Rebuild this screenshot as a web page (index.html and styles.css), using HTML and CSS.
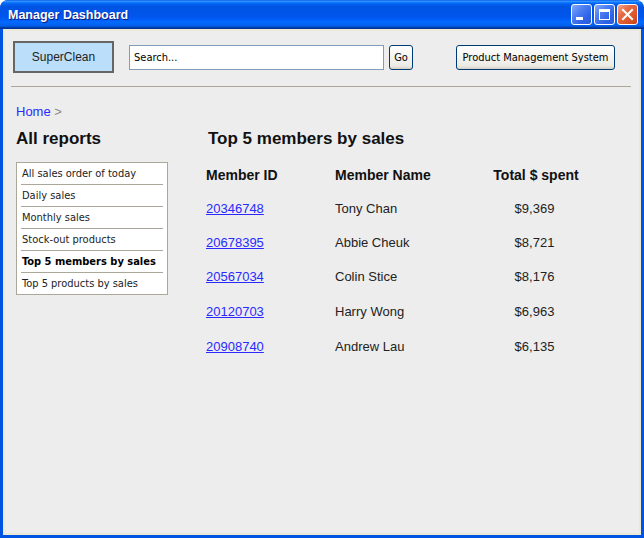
FILE: index.html
```html
<!DOCTYPE html>
<html>
<head>
<meta charset="utf-8">
<title>Manager Dashboard</title>
<link rel="stylesheet" href="styles.css">
</head>
<body>
<div class="window">
  <div class="titlebar">
    <span class="title">Manager Dashboard</span>
    <div class="controls">
      <span class="ctl ctl-blue">
        <svg width="19" height="19" viewBox="0 0 19 19"><rect x="4" y="12" width="7" height="3" fill="#fff"/></svg>
      </span>
      <span class="ctl ctl-blue">
        <svg width="19" height="19" viewBox="0 0 19 19"><path d="M4 4h11v11H4z M5 7v7h9V7z" fill="#fff" fill-rule="evenodd"/></svg>
      </span>
      <span class="ctl ctl-close">
        <svg width="19" height="19" viewBox="0 0 19 19"><path d="M5 5L14 14M14 5L5 14" stroke="#fff" stroke-width="2" stroke-linecap="square"/></svg>
      </span>
    </div>
  </div>
  <div class="client">
    <div class="toolbar">
      <div class="brand">SuperClean</div>
      <div class="search">Search...</div>
      <button class="xp-btn go">Go</button>
      <button class="xp-btn pms">Product Management System</button>
    </div>
    <div class="divider"></div>
    <div class="crumb"><a href="#" class="crumb-link">Home</a> <span class="crumb-sep">&gt;</span></div>
    <div class="cols">
      <aside class="side">
        <h2 class="heading">All reports</h2>
        <ul class="reports">
          <li>All sales order of today</li>
          <li>Daily sales</li>
          <li>Monthly sales</li>
          <li>Stock-out products</li>
          <li class="active">Top 5 members by sales</li>
          <li>Top 5 products by sales</li>
        </ul>
      </aside>
      <main class="main">
        <h2 class="heading main-heading">Top 5 members by sales</h2>
        <div class="table">
          <div class="th">Member ID</div>
          <div class="th">Member Name</div>
          <div class="th num">Total $ spent</div>

          <div class="td"><a href="#" class="mlink">20346748</a></div>
          <div class="td">Tony Chan</div>
          <div class="td num amt">$9,369</div>

          <div class="td"><a href="#" class="mlink">20678395</a></div>
          <div class="td">Abbie Cheuk</div>
          <div class="td num amt">$8,721</div>

          <div class="td"><a href="#" class="mlink">20567034</a></div>
          <div class="td">Colin Stice</div>
          <div class="td num amt">$8,176</div>

          <div class="td"><a href="#" class="mlink">20120703</a></div>
          <div class="td">Harry Wong</div>
          <div class="td num amt">$6,963</div>

          <div class="td"><a href="#" class="mlink">20908740</a></div>
          <div class="td">Andrew Lau</div>
          <div class="td num amt">$6,135</div>
        </div>
      </main>
    </div>
  </div>
</div>
</body>
</html>
```
FILE: styles.css
```css
html, body {
  margin: 0;
  padding: 0;
  background: #ffffff;
}

.window {
  width: 644px;
  height: 538px;
  box-sizing: border-box;
  background: #0054e3;
  border-radius: 8px 8px 0 0;
  display: flex;
  flex-direction: column;
  overflow: hidden;
}

.titlebar {
  height: 29px;
  flex: none;
  display: flex;
  align-items: center;
  padding: 0 6px 0 8px;
  border-radius: 8px 8px 0 0;
  background: linear-gradient(to bottom,
    #0058ee 0%, #3a93ff 4%, #288eff 6%, #127dff 8%, #036ffc 10%,
    #0262ee 14%, #0057e5 20%, #0054e3 24%, #0055eb 56%, #005bf5 66%,
    #026afe 76%, #0062ef 86%, #0052d6 92%, #0040ab 94%, #003092 100%);
}

.title {
  font-family: "Liberation Sans", Arial, sans-serif;
  font-weight: bold;
  font-size: 12.5px;
  color: #ffffff;
  text-shadow: 1px 1px 0 #0a1883;
}

.controls {
  margin-left: auto;
  display: flex;
  gap: 2px;
}

.ctl {
  width: 21px;
  height: 21px;
  box-sizing: border-box;
  border: 1px solid #ffffff;
  border-radius: 3px;
  display: block;
}

.ctl svg {
  display: block;
}

.ctl-blue {
  background: linear-gradient(135deg, #86a9f7 0%, #4f80f2 35%, #2f63e8 70%, #2a5ad9 100%);
}

.ctl-close {
  background: linear-gradient(135deg, #f3a58c 0%, #e76a43 35%, #dc5528 70%, #c8431a 100%);
}

.client {
  flex: 1;
  margin: 0 3px 3px 3px;
  border: 2px solid #ece9d8;
  background: #ededed;
  padding-top: 10px;
  font-family: "Liberation Sans", Arial, sans-serif;
}

.toolbar {
  display: flex;
  align-items: center;
  padding-left: 8px;
  height: 32px;
}

.brand {
  width: 101px;
  height: 32px;
  box-sizing: border-box;
  border: 2px solid #666666;
  background: #bbdefb;
  display: flex;
  align-items: center;
  justify-content: center;
  font-size: 12px;
  color: #222222;
}

.search {
  margin-left: 15px;
  width: 255px;
  height: 25px;
  box-sizing: border-box;
  border: 1px solid #7f9db9;
  background: #ffffff;
  padding-left: 4px;
  font-family: "DejaVu Sans Condensed", "DejaVu Sans", sans-serif;
  font-size: 11px;
  line-height: 23px;
  color: #000000;
}

.xp-btn {
  height: 25px;
  box-sizing: border-box;
  border: 1px solid #003c74;
  border-radius: 3px;
  background: linear-gradient(to bottom, #ffffff 0%, #f4f3ee 50%, #ecebe6 86%, #d6d0c5 100%);
  font-family: "DejaVu Sans Condensed", "DejaVu Sans", sans-serif;
  font-size: 11px;
  color: #000000;
  padding: 0;
  margin: 0;
}

.go {
  margin-left: 5px;
  width: 24px;
}

.pms {
  margin-left: 43px;
  width: 159px;
}

.divider {
  margin: 13px 8px 0 6px;
  border-top: 1px solid #aca899;
}

.crumb {
  margin: 17px 0 0 11px;
  font-size: 13px;
  line-height: 15px;
}

.crumb-link {
  color: #2a2aff;
  text-decoration: none;
}

.crumb-sep {
  color: #888888;
}

.cols {
  display: flex;
  margin: 10px 0 0 11px;
}

.side {
  width: 152px;
  flex: none;
}

.heading {
  margin: 0;
  font-size: 17px;
  line-height: 20px;
  font-weight: bold;
  color: #111111;
}

.main {
  margin-left: 38px;
}

.main-heading {
  padding-left: 2px;
}

.reports {
  list-style: none;
  margin: 13px 0 0 0;
  padding: 0 4px;
  border: 1px solid #aca899;
  background: #ffffff;
}

.reports li {
  height: 21px;
  line-height: 21px;
  padding-left: 1px;
  border-bottom: 1px solid #aca899;
  font-family: "DejaVu Sans Condensed", "DejaVu Sans", sans-serif;
  font-size: 11px;
  color: #222222;
  white-space: nowrap;
}

.reports li:last-child {
  border-bottom: none;
}

.reports li.active {
  font-weight: bold;
  color: #000000;
}

.table {
  display: grid;
  grid-template-columns: 129px 146px 110px;
  grid-template-rows: 34px 34px 34px 35px 35px 34px;
  margin-top: 8.5px;
}

.th {
  font-size: 14px;
  font-weight: bold;
  line-height: 34px;
  color: #111111;
  white-space: nowrap;
}

.td {
  font-size: 13px;
  line-height: 34px;
  color: #222222;
  white-space: nowrap;
}

.num {
  text-align: center;
}

.amt {
  padding-right: 3px;
}

.mlink {
  color: #2a2aff;
  text-decoration: underline;
}
```
